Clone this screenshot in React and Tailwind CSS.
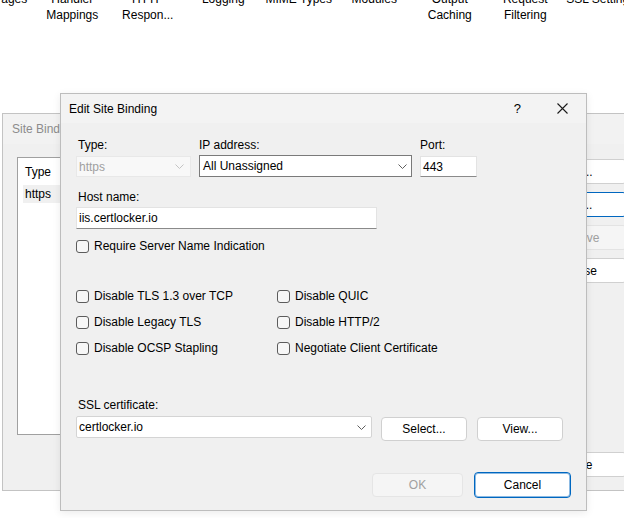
import React from 'react';

const tools = [
  ['Error Pages', ''],
  ['Handler', 'Mappings'],
  ['HTTP', 'Respon...'],
  ['Logging', ''],
  ['MIME Types', ''],
  ['Modules', ''],
  ['Output', 'Caching'],
  ['Request', 'Filtering'],
  ['SSL Settings', ''],
];

const Chevron = ({ light }) => (
  <svg width="9" height="5" viewBox="0 0 9 5" className="shrink-0">
    <path d="M0.5 0.5 L4.5 4.5 L8.5 0.5" fill="none" stroke={light ? '#c4c4c4' : '#5f5f5f'} strokeWidth="1" />
  </svg>
);

const CloseGlyph = ({ color = '#1a1a1a' }) => (
  <svg width="11" height="11" viewBox="0 0 11 11">
    <path d="M0.5 0.5 L10.5 10.5 M10.5 0.5 L0.5 10.5" stroke={color} strokeWidth="1.1" fill="none" />
  </svg>
);

const Check = ({ label }) => (
  <div className="flex items-center h-[16px] gap-[5px]">
    <div className="w-[13px] h-[13px] rounded-[3px] border border-[#5c5c5c] bg-[#f7f7f7]"></div>
    <span>{label}</span>
  </div>
);

const BackButton = ({ children, variant }) => {
  const styles = {
    default: 'bg-white border-[#d0d0d0] text-black',
    primary: 'bg-white border-[#0067c0] text-black',
    disabled: 'bg-[#f5f5f5] border-[#e3e3e3] text-[#a0a0a0]',
  };
  return (
    <div className={`h-[25px] w-[100px] border rounded-[4px] flex items-center justify-center ${styles[variant || 'default']}`}>
      {children}
    </div>
  );
};

export default function App() {
  return (
    <div
      className="relative w-[624px] h-[518px] overflow-hidden bg-white text-[12px] text-black"
      style={{ fontFamily: '"Liberation Sans", Arial, sans-serif' }}
    >
      {/* toolbar labels, cut off at the top */}
      <div className="flex -ml-[44px] -mt-[9px]">
        <div className="w-[78.5px] shrink-0 text-center leading-[16px] whitespace-nowrap">
          <div>{tools[0][0]}</div>
          <div>{'\u00a0'}</div>
        </div>
        {tools.slice(1).map(([a, b], i) => (
          <div key={i} className="w-[75.5px] shrink-0 text-center leading-[16px] whitespace-nowrap">
            <div>{a || '\u00a0'}</div>
            <div>{b || '\u00a0'}</div>
          </div>
        ))}
      </div>

      {/* Site Bindings window (behind) */}
      <div className="absolute left-[2px] top-[113px] w-[680px] h-[378px] border border-[#c3c3c3] bg-[#f0f0f0]">
        <div className="h-[30px] flex items-center pl-[9px] bg-[#f2f2f2] text-[#8c8c8c]">
          <span>Site Bindings</span>
          <div className="ml-[492px] mt-[-1px]">
            <CloseGlyph color="#a8a8a8" />
          </div>
        </div>
        <div className="flex pl-[14px] pt-[13px] gap-[12px]">
          <div className="w-[498px] h-[278px] border border-[#a0a0a0] bg-white pt-[6px] pl-[5px]">
            <div className="h-[16px] leading-[16px] pl-[2px]">Type</div>
            <div className="h-[18px] leading-[18px] mt-[5px] pl-[2px] bg-[#f0f0f0]">https</div>
          </div>
          <div className="flex flex-col pt-[2px]">
            <div className="flex flex-col gap-[8px]">
              <BackButton>Add...</BackButton>
              <BackButton variant="primary">Edit...</BackButton>
              <BackButton variant="disabled">Remove</BackButton>
              <BackButton>Browse</BackButton>
            </div>
            <div className="mt-[169px]">
              <BackButton>Close</BackButton>
            </div>
          </div>
        </div>
      </div>

      {/* Edit Site Binding dialog */}
      <div className="absolute left-[60px] top-[93px] w-[527px] h-[418px] border border-[#bdbdbd] bg-[#f0f0f0] shadow-[0_2px_8px_rgba(0,0,0,0.08)]">
        <div className="h-[29px] flex items-center pl-[8px] bg-[#f3f3f3]">
          <span>Edit Site Binding</span>
          <span className="ml-auto text-[13px]">?</span>
          <div className="ml-[36px] mr-[18px]">
            <CloseGlyph />
          </div>
        </div>

        <div className="pl-[15px] pt-[14px]">
          <div className="flex gap-[8px]">
            <div className="w-[115px]">
              <div className="h-[16px] leading-[16px] pl-[2px]">Type:</div>
              <div className="mt-[3px] h-[21px] border border-[#e8e8e8] bg-[#f8f8f8] flex items-center pl-[2px] pr-[6px] text-[#a0a0a0]">
                <span className="flex-1">https</span>
                <Chevron light />
              </div>
            </div>
            <div className="w-[213px]">
              <div className="h-[16px] leading-[16px]">IP address:</div>
              <div className="mt-[2px] h-[22px] border border-[#7a7a7a] bg-white flex items-center pl-[3px] pr-[4px]">
                <span className="flex-1">All Unassigned</span>
                <Chevron />
              </div>
            </div>
            <div className="w-[57px]">
              <div className="h-[16px] leading-[16px]">Port:</div>
              <div className="mt-[3px] h-[21px] border border-[#e3e3e3] border-b-[#8a8a8a] bg-white flex items-center pl-[2px]">
                443
              </div>
            </div>
          </div>

          <div className="mt-[12px] h-[16px] leading-[16px] pl-[2px]">Host name:</div>
          <div className="mt-[2px] w-[301px] h-[22px] border border-[#e3e3e3] border-b-[#8a8a8a] bg-white flex items-center pl-[2px]">
            iis.certlocker.io
          </div>

          <div className="mt-[9px]">
            <Check label="Require Server Name Indication" />
          </div>

          <div className="mt-[34px] grid grid-cols-[201px_201px] gap-y-[10px]">
            <Check label="Disable TLS 1.3 over TCP" />
            <Check label="Disable QUIC" />
            <Check label="Disable Legacy TLS" />
            <Check label="Disable HTTP/2" />
            <Check label="Disable OCSP Stapling" />
            <Check label="Negotiate Client Certificate" />
          </div>

          <div className="mt-[41px] h-[16px] leading-[16px] pl-[2px]">SSL certificate:</div>
          <div className="mt-[3px] flex items-start">
            <div className="w-[296px] h-[22px] border border-[#d4d4d4] rounded-[2px] bg-white flex items-center pl-[2px] pr-[5px]">
              <span className="flex-1">certlocker.io</span>
              <Chevron />
            </div>
            <div className="ml-[9px] mt-[1px] w-[86px] h-[24px] border border-[#d0d0d0] rounded-[4px] bg-white flex items-center justify-center">
              Select...
            </div>
            <div className="ml-[10px] mt-[1px] w-[86px] h-[24px] border border-[#d0d0d0] rounded-[4px] bg-white flex items-center justify-center">
              View...
            </div>
          </div>
        </div>

        <div className="mt-[31px] pr-[15px] flex justify-end items-center gap-[11px]">
          <div className="w-[91px] h-[24px] border border-[#e5e5e5] rounded-[4px] bg-[#f5f5f5] text-[#a0a0a0] flex items-center justify-center">
            OK
          </div>
          <div className="w-[97px] h-[26px] border border-[#0067c0] rounded-[4px] bg-white shadow-[inset_0_0_0_1px_rgba(0,103,192,0.45)] flex items-center justify-center">
            Cancel
          </div>
        </div>
      </div>
    </div>
  );
}
